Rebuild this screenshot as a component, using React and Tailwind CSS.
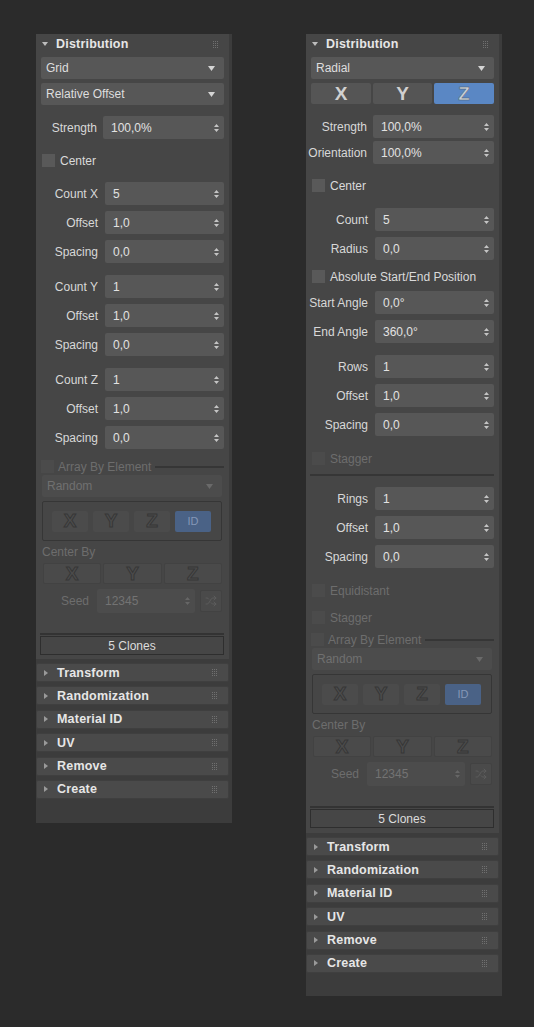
import React from "react";
import { Shuffle } from "lucide-react";

const Grip = () => (
  <svg width="6" height="7" viewBox="0 0 6 7" className="shrink-0">
    {[0, 2, 4].map((x) =>
      [0, 2, 4, 6].map((y) => (
        <rect key={x + "-" + y} x={x} y={y} width="1" height="1" fill="#707070" />
      ))
    )}
  </svg>
);

const Spinner = ({ dim }) => (
  <svg width="5" height="8" viewBox="0 0 5 8" className="shrink-0">
    <path d="M0 3L2.5 0L5 3Z M0 5L2.5 8L5 5Z" fill={dim ? "#666666" : "#c4c4c4"} />
  </svg>
);

function RolloutTitle({ title }) {
  return (
    <div className="flex items-center h-[20px] pl-[6px] pr-[10px]">
      <svg width="6" height="4" viewBox="0 0 6 4">
        <path d="M0 0H6L3 4Z" fill="#bdbdbd" />
      </svg>
      <span className="ml-[8px] font-bold text-[12.5px] text-[#e6e6e6] tracking-[0.2px]">{title}</span>
      <span className="flex-1" />
      <Grip />
    </div>
  );
}

function Rollout({ title }) {
  return (
    <div className="flex items-center h-[19px] pl-[7px] pr-[10px] bg-[#4a4a4a] border border-[#3f3f3f] rounded-[2px]">
      <svg width="4" height="6" viewBox="0 0 4 6">
        <path d="M0 0L4 3L0 6Z" fill="#9a9a9a" />
      </svg>
      <span className="ml-[9px] font-bold text-[12.5px] text-[#e6e6e6] tracking-[0.2px]">{title}</span>
      <span className="flex-1" />
      <Grip />
    </div>
  );
}

function Dropdown({ value, className = "" }) {
  return (
    <div className={`mx-[5px] h-[22px] flex items-center pl-[5px] pr-[9px] rounded-[2px] bg-[#575757] text-[#dedede] ${className}`}>
      <span className="flex-1">{value}</span>
      <svg width="7" height="5" viewBox="0 0 7 5">
        <path d="M0 0H7L3.5 5Z" fill="#d4d4d4" />
      </svg>
    </div>
  );
}

function NumRow({ label, value, wide, className = "" }) {
  return (
    <div className={`flex items-center h-[23px] ${className}`}>
      <div className={`${wide ? "w-[61px]" : "w-[62px]"} text-right whitespace-nowrap text-[#d8d8d8]`}>{label}</div>
      <div className={`${wide ? "ml-[6px] w-[121px]" : "ml-[7px] w-[119px]"} h-full bg-[#575757] rounded-[2px] flex items-center pl-[8px] pr-[5px]`}>
        <span className="flex-1 text-[#e2e2e2]">{value}</span>
        <Spinner />
      </div>
    </div>
  );
}

function Check({ label, dim, className = "" }) {
  return (
    <div className={`flex items-center h-[13px] ml-[6px] ${className}`}>
      <div className={`w-[13px] h-[13px] ${dim ? "bg-[#4b4b4b]" : "bg-[#595959]"}`} />
      <span className={`ml-[5px] ${dim ? "text-[#6d6d6d]" : "text-[#dadada]"}`}>{label}</span>
    </div>
  );
}

const engraved = "text-[#4c4c4c] [-webkit-text-stroke:1px_#373737] text-[19px] font-bold";

function ArraySection() {
  return (
    <>
      <div className="flex items-center h-[13px] ml-[5px] mr-[5px]">
        <div className="w-[13px] h-[13px] bg-[#4b4b4b]" />
        <span className="ml-[4px] text-[#6d6d6d] whitespace-nowrap">Array By Element</span>
        <div className="flex-1 ml-[4px] h-[2px] bg-[#363636]" />
      </div>
      <div className="mt-[2px] ml-[6px] mr-[7px] h-[22px] flex items-center pl-[5px] pr-[9px] rounded-[2px] bg-[#4c4c4c] text-[#707070]">
        <span className="flex-1">Random</span>
        <svg width="7" height="5" viewBox="0 0 7 5">
          <path d="M0 0H7L3.5 5Z" fill="#6a6a6a" />
        </svg>
      </div>
      <div className="mt-[4px] ml-[6px] mr-[7px] h-[40px] border-[1.5px] border-[#363636] rounded-[2px] flex items-center pl-[9px] gap-[5px]">
        {["X", "Y", "Z"].map((l) => (
          <div key={l} className={`w-[36px] h-[21px] rounded-[2px] bg-[#4b4b4b] flex items-center justify-center ${engraved}`}>
            {l}
          </div>
        ))}
        <div className="w-[36px] h-[21px] rounded-[2px] bg-[#4a6286] flex items-center justify-center text-[#8597b7] text-[11px]">
          ID
        </div>
      </div>
      <div className="mt-[4px] ml-[6px] h-[14px] leading-[14px] text-[#6d6d6d]">Center By</div>
      <div className="mt-[4px] ml-[7px] mr-[7px] flex gap-[2px] h-[21px]">
        {["X", "Y", "Z"].map((l) => (
          <div key={l} className={`flex-1 rounded-[2px] bg-[#4a4a4a] border border-[#424242] flex items-center justify-center ${engraved}`}>
            {l}
          </div>
        ))}
      </div>
      <div className="mt-[5px] flex items-center h-[24px]">
        <div className="w-[53px] text-right text-[#6d6d6d]">Seed</div>
        <div className="ml-[8px] w-[98px] h-full bg-[#4c4c4c] rounded-[2px] flex items-center pl-[8px] pr-[5px]">
          <span className="flex-1 text-[#737373]">12345</span>
          <Spinner dim />
        </div>
        <div className="ml-[5px] w-[22px] h-[22px] rounded-[2px] bg-[#4a4a4a] border border-[#424242] flex items-center justify-center">
          <Shuffle size={12} color="#5c5c5c" strokeWidth={2} />
        </div>
      </div>
      <div className="mt-[20px] ml-[4px] mr-[5px] h-[2px] bg-[#333333]" />
      <div className="mt-[1px] ml-[4px] mr-[5px] h-[19px] border border-[#2e2e2e] flex items-center justify-center text-[#dcdcdc]">
        5 Clones
      </div>
    </>
  );
}

function Rollouts() {
  return (
    <div className="mt-[4px] flex flex-col gap-[4.4px]">
      {["Transform", "Randomization", "Material ID", "UV", "Remove", "Create"].map((t) => (
        <Rollout key={t} title={t} />
      ))}
    </div>
  );
}

function GridPanel() {
  return (
    <div className="w-[196px] bg-[#3c3c3c] pr-[3px] pb-[24px]">
      <div className="bg-[#464646] pb-[4px] flex flex-col">
        <RolloutTitle title="Distribution" />
        <Dropdown value="Grid" className="mt-[3px]" />
        <Dropdown value="Relative Offset" className="mt-[4px] h-[21px]" />
        <NumRow label="Strength" value="100,0%" wide className="mt-[11px]" />
        <Check label="Center" className="mt-[15px]" />
        <NumRow label="Count X" value="5" className="mt-[15px]" />
        <NumRow label="Offset" value="1,0" className="mt-[6px]" />
        <NumRow label="Spacing" value="0,0" className="mt-[6px]" />
        <NumRow label="Count Y" value="1" className="mt-[12px]" />
        <NumRow label="Offset" value="1,0" className="mt-[6px]" />
        <NumRow label="Spacing" value="0,0" className="mt-[6px]" />
        <NumRow label="Count Z" value="1" className="mt-[12px]" />
        <NumRow label="Offset" value="1,0" className="mt-[6px]" />
        <NumRow label="Spacing" value="0,0" className="mt-[6px]" />
        <div className="mt-[11px]" />
        <ArraySection />
      </div>
      <Rollouts />
    </div>
  );
}

function RadialPanel() {
  return (
    <div className="w-[196px] bg-[#3c3c3c] pr-[3px] pb-[23px]">
      <div className="bg-[#464646] pb-[4px] flex flex-col">
        <RolloutTitle title="Distribution" />
        <Dropdown value="Radial" className="mt-[3px]" />
        <div className="mt-[4px] mx-[5px] h-[21px] flex gap-[2px] text-[19px] font-bold">
          <div className="w-[60px] rounded-[2px] bg-[#555555] text-[#d0d0d0] flex items-center justify-center">X</div>
          <div className="w-[59px] rounded-[2px] bg-[#555555] text-[#d0d0d0] flex items-center justify-center">Y</div>
          <div className="flex-1 rounded-[2px] bg-[#5a87c4] text-[#c9d0d8] [-webkit-text-stroke:0.5px_#4a5a70] flex items-center justify-center">Z</div>
        </div>
        <NumRow label="Strength" value="100,0%" wide className="mt-[11px]" />
        <NumRow label="Orientation" value="100,0%" wide className="mt-[3px]" />
        <Check label="Center" className="mt-[15px]" />
        <NumRow label="Count" value="5" className="mt-[16px]" />
        <NumRow label="Radius" value="0,0" className="mt-[6px]" />
        <Check label="Absolute Start/End Position" className="mt-[10px]" />
        <NumRow label="Start Angle" value="0,0°" className="mt-[8px]" />
        <NumRow label="End Angle" value="360,0°" className="mt-[6px]" />
        <NumRow label="Rows" value="1" className="mt-[12px]" />
        <NumRow label="Offset" value="1,0" className="mt-[6px]" />
        <NumRow label="Spacing" value="0,0" className="mt-[6px]" />
        <Check label="Stagger" dim className="mt-[16px]" />
        <div className="mt-[9px] ml-[4px] mr-[5px] h-[2px] bg-[#363636]" />
        <NumRow label="Rings" value="1" className="mt-[11px]" />
        <NumRow label="Offset" value="1,0" className="mt-[6px]" />
        <NumRow label="Spacing" value="0,0" className="mt-[6px]" />
        <Check label="Equidistant" dim className="mt-[16px]" />
        <Check label="Stagger" dim className="mt-[14px]" />
        <div className="mt-[9px]" />
        <ArraySection />
        <div className="h-[1px]" />
      </div>
      <Rollouts />
    </div>
  );
}

export default function App() {
  return (
    <div className="w-[534px] h-[1027px] bg-[#2b2b2b] flex items-start gap-[74px] pl-[36px] pt-[34px] text-[12px] leading-[14px] font-[family-name:Liberation_Sans,Arial,sans-serif]">
      <GridPanel />
      <RadialPanel />
    </div>
  );
}
